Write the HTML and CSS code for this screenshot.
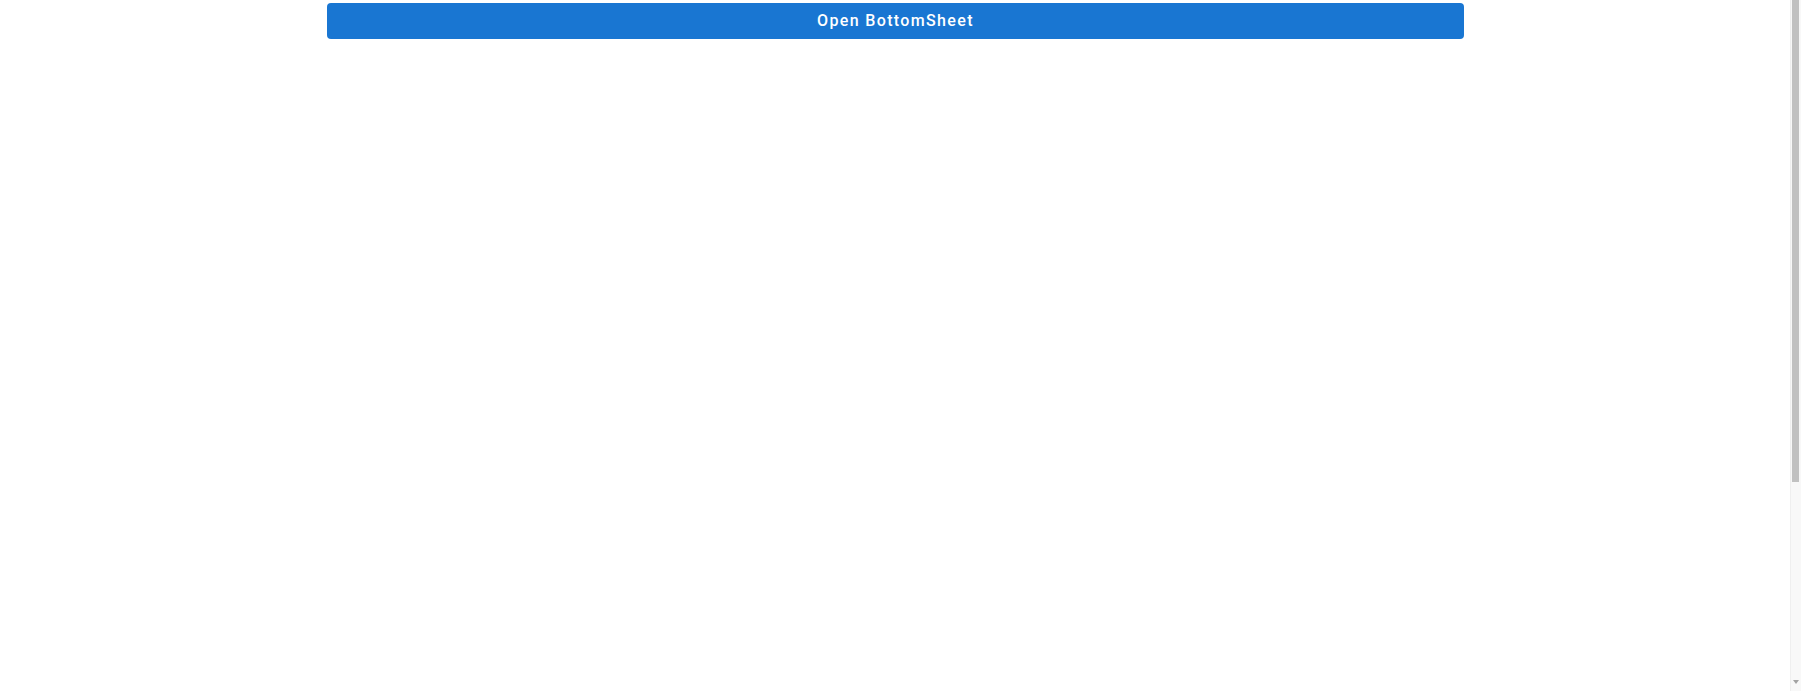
FILE: index.html
```html
<!DOCTYPE html>
<html>
<head>
<meta charset="utf-8">
<link rel="stylesheet" href="styles.css">
</head>
<body>
<div class="frame">
  <main class="page">
    <div class="container">
      <button class="open-btn" type="button">Open BottomSheet</button>
    </div>
  </main>
  <div class="scrollbar" aria-hidden="true">
    <div class="thumb"></div>
    <div class="track-rest"></div>
    <div class="arrow-down"></div>
  </div>
</div>
</body>
</html>
```
FILE: styles.css
```css
html, body {
  margin: 0;
  padding: 0;
  background: #ffffff;
  overflow: hidden;
  height: 100%;
}
.frame {
  display: flex;
  height: 100vh;
}
.page {
  flex: 1;
  padding-top: 3px;
  box-sizing: border-box;
}
.container {
  display: flex;
  padding-left: 327px;
}
.open-btn {
  width: 1137px;
  height: 36px;
  border: none;
  border-radius: 4px;
  background: #1976d2;
  color: #ffffff;
  font-family: Roboto, "Liberation Sans", sans-serif;
  font-weight: 500;
  font-size: 16px;
  letter-spacing: 1.35px;
  line-height: 24px;
  padding: 6px 16px 6px;
  cursor: pointer;
}
.scrollbar {
  width: 11px;
  display: flex;
  flex-direction: column;
  background: #f8f8f8;
  border-left: 1px solid #efefef;
  box-sizing: border-box;
  padding: 0 2px 0 1px;
}
.thumb {
  height: 482px;
  background: #c1c1c1;
}
.track-rest {
  flex: 1;
}
.arrow-down {
  height: 14px;
  display: flex;
  justify-content: center;
}
.arrow-down::before {
  content: "";
  width: 0;
  height: 0;
  margin-top: 3px;
  border-left: 3.5px solid transparent;
  border-right: 3.5px solid transparent;
  border-top: 4px solid #a3a3a3;
}
```
